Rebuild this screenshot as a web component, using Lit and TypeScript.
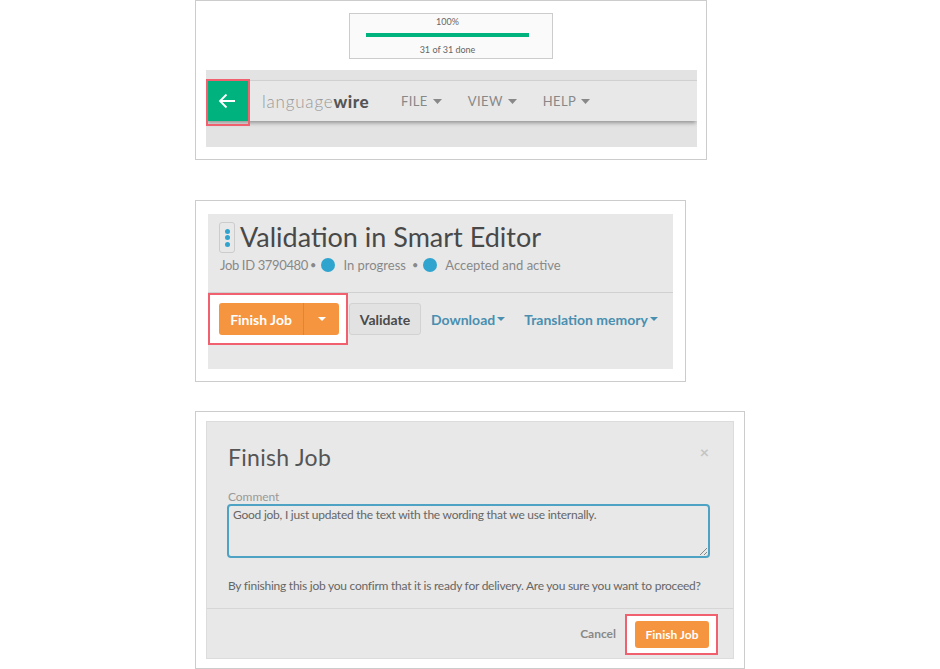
import { LitElement, css, html } from 'lit';
import { customElement } from 'lit/decorators.js';

const caret = html`<svg class="caret" width="9" height="5" viewBox="0 0 10 5" preserveAspectRatio="none"><path d="M0 0h10L5 5z" fill="currentColor"></path></svg>`;

@customElement('app-root')
export class AppRoot extends LitElement {
    static styles = css`
        :host {
            display: block;
            width: 940px;
            height: 669px;
            overflow: hidden;
            background: #fff;
            font-family: Lato, "Noto Sans", sans-serif;
            color: #666;
        }

        .shot {
            box-sizing: border-box;
            border: 1px solid #ccc;
            background: #fff;
        }

        /* top panel */
        .shot-nav {
            width: 512px;
            height: 160px;
            margin-left: 195px;
            padding: 12px 9px 12px 10px;
        }

        .progress {
            box-sizing: border-box;
            width: 204px;
            height: 46px;
            margin-left: 143px;
            border: 1px solid #ccc;
            background: #fafafa;
            display: flex;
            flex-direction: column;
            align-items: center;
            font-size: 9px;
            color: #666;
            padding: 2px 7px 0 0;
        }

        .progress-bar {
            width: 163px;
            height: 4px;
            background: #00b27d;
            margin: 6px 0 7px;
        }

        .nav-wrap {
            height: 77px;
            margin-top: 11px;
            background: #e3e3e3;
            padding-top: 10px;
            box-sizing: border-box;
            overflow: hidden;
            position: relative;
        }

        .nav {
            height: 40px;
            background: #e8e8e8;
            border-top: 1px solid #d0d0d0;
            box-shadow: 0 3px 4px -1px rgba(0, 0, 0, 0.35);
            display: flex;
            align-items: center;
        }

        .back {
            width: 40px;
            height: 40px;
            margin-left: 2px;
            padding-right: 3px;
            box-sizing: border-box;
            background: #00b27d;
            display: flex;
            align-items: center;
            justify-content: center;
        }

        .back-ring {
            position: absolute;
            left: 0;
            top: 9px;
            width: 44px;
            height: 47px;
            box-sizing: border-box;
            border: 2px solid #f0606f;
        }

        .logo {
            margin-left: 14px;
            font-size: 17px;
            font-weight: 300;
            letter-spacing: 0.8px;
            color: #999;
            width: 139px;
        }

        .logo b {
            font-weight: 900;
            color: #555;
            letter-spacing: 0.6px;
        }

        .menu {
            display: flex;
            align-items: center;
            gap: 5px;
            font-size: 13px;
            letter-spacing: 0.4px;
            color: #888;
            margin-right: 26px;
        }

        /* middle panel */
        .shot-job {
            width: 491px;
            height: 182px;
            margin: 40px 0 0 195px;
            padding: 13px 12px 12px;
        }

        .job {
            height: 155px;
            background: #e8e8e8;
            display: flex;
            flex-direction: column;
        }

        .job-head {
            height: 79px;
            box-sizing: border-box;
            border-bottom: 1px solid #d0d0d0;
            padding: 8px 11px 0;
        }

        .title-row {
            display: flex;
            align-items: center;
            gap: 5px;
        }

        .kebab {
            box-sizing: border-box;
            width: 16px;
            height: 31px;
            border: 1px solid #ccc;
            border-radius: 3px;
            display: flex;
            flex-direction: column;
            align-items: center;
            justify-content: center;
            gap: 1.5px;
        }

        .kebab i,
        .dot {
            display: block;
            border-radius: 50%;
            background: #2fa4cf;
        }

        .kebab i {
            width: 5px;
            height: 5px;
        }

        h1 {
            margin: 0 0 2px;
            font-size: 27px;
            font-weight: 400;
            color: #484848;
            line-height: 29px;
        }

        .meta {
            display: flex;
            align-items: center;
            font-size: 13px;
            color: #888;
            margin: 3px 0 0 1px;
            line-height: 18px;
            white-space: nowrap;
        }

        .job-id {
            letter-spacing: -0.35px;
        }

        .dot {
            width: 14px;
            height: 14px;
        }

        .sep {
            margin: 0 5px 0 6px;
            font-size: 11px;
        }

        .job-id + .sep {
            margin-left: 2px;
        }

        .status-label {
            margin-left: 8px;
        }

        .job-actions {
            display: flex;
            align-items: center;
        }

        .ring {
            box-sizing: border-box;
            border: 2px solid #f0606f;
            background: #fff;
        }

        .ring-split {
            padding: 8px 7px 8px 9px;
            width: 140px;
            height: 52px;
        }

        .split {
            display: flex;
            height: 32px;
            width: 120px;
            border-radius: 3px;
            background: #f59540;
            color: #fff;
            font-weight: 700;
            font-size: 14px;
            align-items: center;
        }

        .split-main {
            width: 85px;
            height: 100%;
            display: flex;
            align-items: center;
            justify-content: center;
            border-right: 1px solid #e08530;
            box-sizing: border-box;
        }

        .split-arrow {
            flex: 1;
            display: flex;
            align-items: center;
            justify-content: center;
        }

        .split-arrow .caret {
            width: 8px;
            height: 4px;
        }

        .validate {
            box-sizing: border-box;
            width: 72px;
            height: 32px;
            margin-left: 1px;
            border: 1px solid #d2d2d2;
            border-radius: 3px;
            background: #e2e2e2;
            color: #4a4a4a;
            font-weight: 700;
            font-size: 14px;
            display: flex;
            align-items: center;
            justify-content: center;
        }

        .link {
            display: flex;
            align-items: center;
            gap: 2px;
            font-weight: 700;
            font-size: 14px;
            color: #4a8fb0;
            margin: 0 0 0 10px;
            white-space: nowrap;
        }

        .link + .link {
            margin-left: 19px;
        }

        .link .caret {
            width: 8px;
            height: 4px;
        }

        /* bottom panel */
        .shot-modal {
            width: 550px;
            height: 258px;
            margin: 29px 0 0 195px;
            padding: 9px 10px 0;
        }

        .modal {
            box-sizing: border-box;
            width: 528px;
            height: 238px;
            border: 1px solid #dcdcdc;
            background: #e8e8e8;
            position: relative;
        }

        .modal h2 {
            margin: 0;
            padding: 19px 0 0 21px;
            font-size: 23px;
            font-weight: 400;
            line-height: 32px;
            letter-spacing: 0.3px;
            color: #555;
        }

        .close {
            position: absolute;
            top: 21px;
            right: 24px;
            font-size: 16px;
            font-weight: 700;
            color: #c4c4c4;
            line-height: 18px;
        }

        .comment-label {
            margin: 17px 0 0 21px;
            font-size: 12px;
            color: #999;
            line-height: 13px;
            letter-spacing: -0.05px;
        }

        .comment {
            box-sizing: border-box;
            width: 483px;
            height: 54px;
            margin: 1px 0 0 20px;
            border: 2px solid #4ea3c4;
            border-radius: 4px;
            padding: 1px 4px 0;
            font-size: 12px;
            line-height: 16px;
            letter-spacing: -0.24px;
            color: #666;
            position: relative;
        }

        .grip {
            position: absolute;
            right: 0;
            bottom: 0;
        }

        .confirm {
            margin: 20px 0 0 21px;
            font-size: 12px;
            line-height: 16px;
            letter-spacing: -0.245px;
            color: #666;
            height: 30px;
            white-space: nowrap;
        }

        .modal-foot {
            border-top: 1px solid #d6d6d6;
            display: flex;
            justify-content: flex-end;
            align-items: flex-start;
            padding: 5px 15px 0 0;
            height: 48px;
            box-sizing: border-box;
        }

        .cancel {
            font-size: 12px;
            font-weight: 700;
            color: #888;
            margin: 12px 9px 0 0;
        }

        .ring-finish {
            padding: 5px 7px 5px 8px;
            width: 93px;
            height: 41px;
            display: flex;
        }

        .finish {
            width: 74px;
            height: 27px;
            border-radius: 3px;
            background: #f59540;
            color: #fff;
            font-weight: 700;
            font-size: 12px;
            display: flex;
            align-items: center;
            justify-content: center;
        }
    `;

    render() {
        return html`
            <section class="shot shot-nav">
                <div class="progress">
                    <span>100%</span>
                    <div class="progress-bar"></div>
                    <span>31 of 31 done</span>
                </div>
                <div class="nav-wrap">
                    <div class="nav">
                        <div class="back">
                            <svg width="18" height="16" viewBox="0 0 18 16" fill="none" stroke="#fff" stroke-width="1.8"><path d="M17 8H2M8.5 1.5 2 8l6.5 6.5"></path></svg>
                        </div>
                        <div class="logo">language<b>wire</b></div>
                        <div class="menu">FILE ${caret}</div>
                        <div class="menu">VIEW ${caret}</div>
                        <div class="menu">HELP ${caret}</div>
                    </div>
                    <div class="back-ring"></div>
                </div>
            </section>

            <section class="shot shot-job">
                <div class="job">
                    <div class="job-head">
                        <div class="title-row">
                            <div class="kebab"><i></i><i></i><i></i></div>
                            <h1>Validation in Smart Editor</h1>
                        </div>
                        <div class="meta">
                            <span class="job-id">Job ID 3790480</span><span class="sep">•</span><span class="dot"></span>
                            <span class="status-label">In progress</span><span class="sep">•</span><span class="dot"></span>
                            <span class="status-label">Accepted and active</span>
                        </div>
                    </div>
                    <div class="job-actions">
                        <div class="ring ring-split">
                            <div class="split">
                                <div class="split-main">Finish Job</div>
                                <div class="split-arrow">${caret}</div>
                            </div>
                        </div>
                        <div class="validate">Validate</div>
                        <div class="link">Download ${caret}</div>
                        <div class="link">Translation memory ${caret}</div>
                    </div>
                </div>
            </section>

            <section class="shot shot-modal">
                <div class="modal">
                    <h2>Finish Job</h2>
                    <span class="close">×</span>
                    <div class="comment-label">Comment</div>
                    <div class="comment">
                        Good job, I just updated the text with the wording that we use internally.
                        <svg class="grip" width="10" height="10" viewBox="0 0 10 10" stroke="#888" stroke-width="1"><path d="M9 2 2 9M9 6 6 9"></path></svg>
                    </div>
                    <div class="confirm">By finishing this job you confirm that it is ready for delivery. Are you sure you want to proceed?</div>
                    <div class="modal-foot">
                        <span class="cancel">Cancel</span>
                        <div class="ring ring-finish"><div class="finish">Finish Job</div></div>
                    </div>
                </div>
            </section>
        `;
    }
}
